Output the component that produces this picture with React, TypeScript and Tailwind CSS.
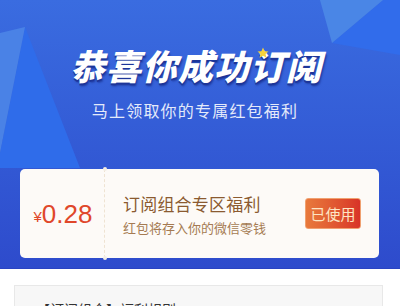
import React from 'react'

const cjk = { fontFamily: '"Noto Sans CJK SC", "Noto Sans", sans-serif' }

export default function App() {
  return (
    <div className="w-[400px] h-[306px] overflow-hidden bg-white" style={cjk}>
      {/* Header */}
      <div className="relative h-[269px] bg-gradient-to-b from-[#3a6ce0] to-[#2e4bcc] border-b border-[#2a44c2]">
        <svg className="absolute inset-0" width="400" height="269" viewBox="0 0 400 269">
          <polygon points="25,27 80,168 0,168 0,153" fill="#2f6cea" />
          <polygon points="0,33 25,27 0,153" fill="#4a82e6" />
          <polygon points="383,0 400,0 400,55 332,43" fill="#316ceb" />
          <polygon points="320,0 383,0 332,43" fill="#4a86e6" />
        </svg>

        <div className="relative flex flex-col items-center pt-[47px]">
          <h1
            className="text-[35px] leading-none font-black italic text-white tracking-[1px] pr-[8px]"
            style={{ textShadow: '0 2px 0 #1d3599, 1px 3px 2px rgba(20,40,130,0.6)' }}
          >
            恭喜你成功订阅
          </h1>
          <p className="mt-[20px] text-[16px] leading-none text-[#e4eafa] tracking-[1.2px] pr-[10px]">
            马上领取你的专属红包福利
          </p>
        </div>

        {/* star over the title */}
        <svg className="absolute left-[257px] top-[47px]" width="12" height="12" viewBox="0 0 12 12">
          <polygon
            points="6,0.5 7.6,4.2 11.5,4.5 8.5,7 9.5,10.8 6,8.7 2.5,10.8 3.5,7 0.5,4.5 4.4,4.2"
            fill="#f7d23a"
          />
        </svg>

        {/* Coupon card */}
        <div className="relative mt-[51px] ml-[20px] w-[359px] h-[89px] rounded-[5px] bg-[#fdfaf7] flex items-center">
          <div className="w-[84px] h-full flex items-center justify-center pl-[2px]" style={{ fontFamily: '"Liberation Sans", Arial, sans-serif' }}>
            <span className="text-[15px] text-[#e0472a] mt-[8px]">¥</span>
            <span className="text-[26px] leading-none text-[#e0472a]">0.28</span>
          </div>
          <div className="relative h-full border-l border-dashed border-[#efe3d2]">
            <span className="absolute -top-[2px] -left-[2.5px] w-[4px] h-[4px] rounded-full bg-[#f3ede4]" />
            <span className="absolute -bottom-[2px] -left-[2.5px] w-[4px] h-[4px] rounded-full bg-[#f3ede4]" />
          </div>
          <div className="flex-1 pl-[18px] flex flex-col">
            <span className="mt-[2px] text-[17px] leading-none text-[#8b5a30] tracking-[0.2px]">订阅组合专区福利</span>
            <span className="mt-[9px] text-[13px] leading-none text-[#a57a52]">红包将存入你的微信零钱</span>
          </div>
          <button className="mr-[18px] w-[56px] h-[31px] rounded-[3px] bg-gradient-to-r from-[#e8793c] to-[#d83328] border border-[#f0a070] text-[15px] text-[#fde5c3] leading-none">
            已使用
          </button>
        </div>
      </div>

      {/* Rules box */}
      <div className="mt-[16px] ml-[14px] w-[369px] h-[60px] bg-[#f7f7f7] border border-[#e8e8e8] pl-[21px] pt-[16px]">
        <p className="text-[14px] leading-none text-[#333333]">【订阅组合】福利规则</p>
      </div>
    </div>
  )
}
